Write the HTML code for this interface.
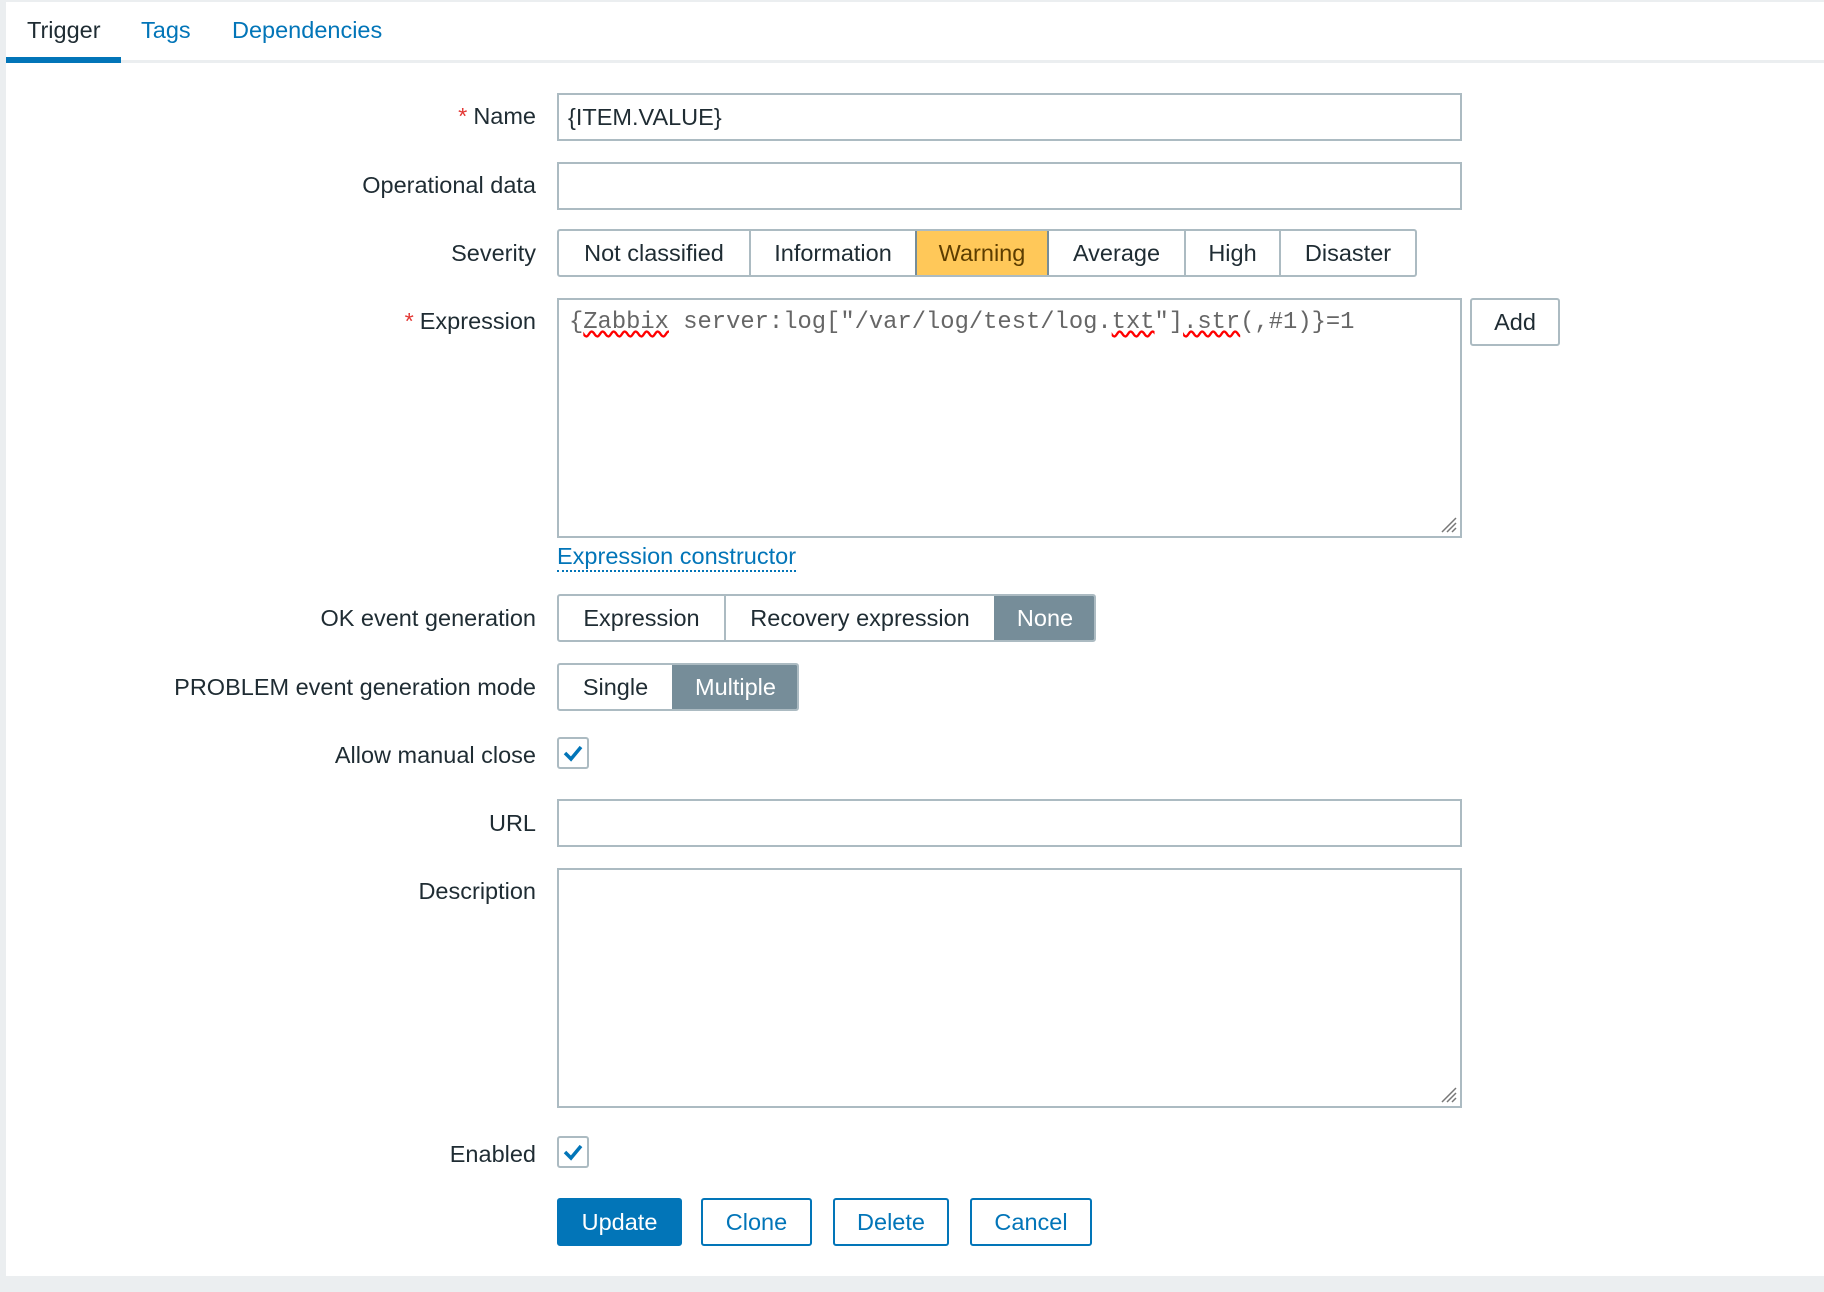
<!DOCTYPE html>
<html><head><meta charset="utf-8"><style>
*{box-sizing:border-box;margin:0;padding:0}
body{width:1824px;height:1292px;background:#ebeef0;font-family:"Liberation Sans",Arial,sans-serif;font-size:23.5px;color:#1f2c33;position:relative;overflow:hidden}
#main{position:absolute;left:6px;top:2px;width:1818px;height:1274px;background:#fff}
.a{position:absolute}
.lbl{position:absolute;right:1288px;text-align:right;white-space:nowrap;line-height:28px}
.req{color:#e33734;margin-right:6px}
.inp{position:absolute;left:551px;width:905px;border:2px solid #acbbc2;background:#fff}
.seg{position:absolute;display:flex;border:2px solid #acbbc2;border-radius:3px;height:48px;overflow:hidden}
.seg div{border-left:2px solid #acbbc2;display:flex;align-items:center;justify-content:center;white-space:nowrap}
.seg div:first-child{border-left:none}
.cb{position:absolute;width:32px;height:32px;border:2px solid #acbbc2;border-radius:3px;background:#fff}
.btn{position:absolute;top:1196px;height:48px;border:2px solid #0275b8;border-radius:3px;color:#0275b8;display:flex;align-items:center;justify-content:center;background:#fff}
</style></head><body>
<div id="main">
<div class="a" style="left:0;top:58px;width:1818px;height:3px;background:#ebeef0"></div>
<div class="a" style="left:0;top:55px;width:115px;height:6px;background:#0275b8"></div>
<div class="a" style="left:21px;top:14px;line-height:28px">Trigger</div>
<div class="a" style="left:135px;top:14px;line-height:28px;color:#0275b8">Tags</div>
<div class="a" style="left:226px;top:14px;line-height:28px;color:#0275b8">Dependencies</div>

<div class="lbl" style="top:100px"><span class="req">*</span>Name</div>
<div class="inp" style="top:91px;height:48px;padding:10px 9px;line-height:24px">{ITEM.VALUE}</div>
<div class="lbl" style="top:169px">Operational data</div>
<div class="inp" style="top:160px;height:48px"></div>

<div class="lbl" style="top:237px">Severity</div>
<div class="seg" style="left:551px;top:227px;width:860px">
<div style="width:190px">Not classified</div><div style="width:166px">Information</div>
<div style="width:134px;background:#ffc859;border:2px solid #768d99;color:#5c3d00;margin:-2px 0">Warning</div>
<div style="width:135px;border-left:none">Average</div><div style="width:95px">High</div><div style="flex:1">Disaster</div></div>

<div class="lbl" style="top:305px"><span class="req">*</span>Expression</div>
<div class="inp" style="top:296px;height:240px;padding:8px 10px;font-family:'Liberation Mono',monospace;font-size:23.8px;color:#666;white-space:nowrap;line-height:30px">{<span style="text-decoration:underline wavy red">Zabbix</span> server:log["/var/log/test/log.<span style="text-decoration:underline wavy red">txt</span>"]<span style="text-decoration:underline wavy red">.str</span>(,#1)}=1
<svg class="a" style="right:2px;bottom:2px" width="20" height="20"><path d="M4 18L18 4M9 18L18 9M14 18L18 14" stroke="#777" stroke-width="1.5"/></svg></div>
<div class="a" style="left:1464px;top:296px;width:90px;height:48px;border:2px solid #acbbc2;border-radius:3px;display:flex;align-items:center;justify-content:center">Add</div>
<div class="a" style="left:551px;top:540px;color:#0275b8;line-height:28px;border-bottom:2px dotted #0275b8">Expression constructor</div>

<div class="lbl" style="top:602px">OK event generation</div>
<div class="seg" style="left:551px;top:592px;width:539px">
<div style="width:165px">Expression</div><div style="width:270px">Recovery expression</div><div style="flex:1;background:#768d99;color:#fff;border-left-color:#768d99">None</div></div>

<div class="lbl" style="top:671px">PROBLEM event generation mode</div>
<div class="seg" style="left:551px;top:661px;width:242px">
<div style="width:113px">Single</div><div style="flex:1;background:#768d99;color:#fff;border-left-color:#768d99">Multiple</div></div>

<div class="lbl" style="top:739px">Allow manual close</div>
<div class="cb" style="left:551px;top:735px"><svg width="28" height="28"><path d="M6 14l6 6 10-12" stroke="#0275b8" stroke-width="3.5" fill="none"/></svg></div>

<div class="lbl" style="top:807px">URL</div>
<div class="inp" style="top:797px;height:48px"></div>

<div class="lbl" style="top:875px">Description</div>
<div class="inp" style="top:866px;height:240px"><svg class="a" style="right:2px;bottom:2px" width="20" height="20"><path d="M4 18L18 4M9 18L18 9M14 18L18 14" stroke="#777" stroke-width="1.5"/></svg></div>

<div class="lbl" style="top:1138px">Enabled</div>
<div class="cb" style="left:551px;top:1134px"><svg width="28" height="28"><path d="M6 14l6 6 10-12" stroke="#0275b8" stroke-width="3.5" fill="none"/></svg></div>

<div class="btn" style="left:551px;width:125px;background:#0275b8;color:#fff">Update</div>
<div class="btn" style="left:695px;width:111px">Clone</div>
<div class="btn" style="left:827px;width:116px">Delete</div>
<div class="btn" style="left:964px;width:122px">Cancel</div>
</div>
</body></html>
